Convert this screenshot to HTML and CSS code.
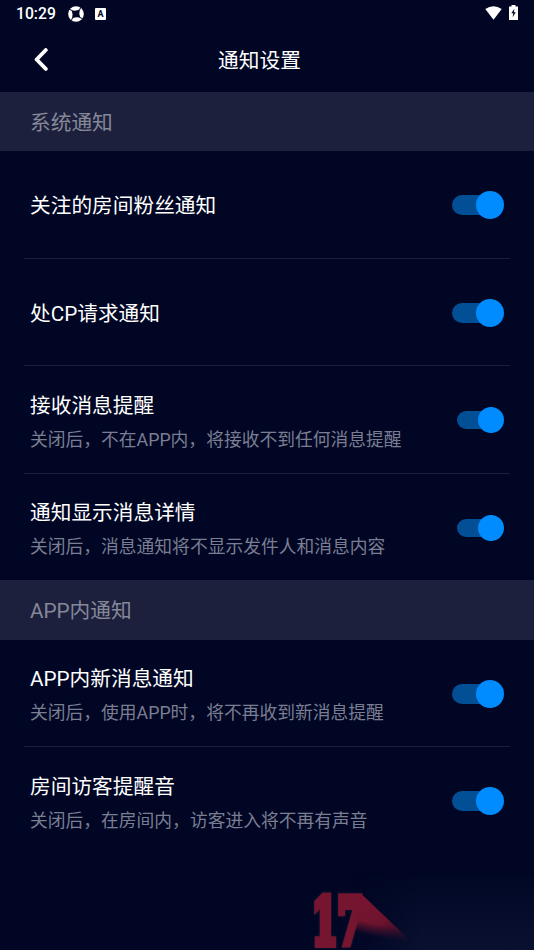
FILE: index.html
```html
<!DOCTYPE html>
<html lang="zh-CN">
<head>
<meta charset="utf-8">
<title>通知设置</title>
<link rel="stylesheet" href="styles.css">
</head>
<body>
<div class="screen">
  <div class="status">
    <span class="time">10:29</span>
    <svg class="aperture" width="16" height="16" viewBox="0 0 16 16">
      <circle cx="8" cy="8" r="7.8" fill="#fff"/>
      <path d="M3.6 4.2Q7.5 5.4 11.8 3.6 10.6 7.5 12.4 11.8 8.5 10.6 4.2 12.4 5.4 8.5 3.6 4.2Z" fill="#000624"/>
      <path d="M4.4 4.6 1.6 3.4M11.4 4.4 12.6 1.6M11.6 11.4 14.4 12.6M4.6 11.6 3.4 14.4" stroke="#000624" stroke-width="1"/>
    </svg>
    <span class="badge">A</span>
    <span class="grow"></span>
    <svg class="wifi" width="17" height="14" viewBox="0 0 17 14"><path d="M.3 3.1Q8.5-2.5 16.7 3.1L8.5 13.7Z" fill="#fff"/></svg>
    <svg class="battery" width="9" height="15" viewBox="0 0 9 15"><path d="M2.5 0h4v1.5H9V15H0V1.5h2.5Z" fill="#fff"/><path d="M5.4 3.7 2.3 8.3h2L3.6 12.2 6.8 7.3H4.9Z" fill="#000624"/></svg>
  </div>
  <header class="nav">
    <svg class="back" width="16" height="24" viewBox="0 0 16 24"><path d="M12.8 2 3.6 11.5l9.2 9.4" fill="none" stroke="#fff" stroke-width="3.8" stroke-linecap="round" stroke-linejoin="round"/></svg>
    <h1>通知设置</h1>
  </header>

  <h2 class="section">系统通知</h2>
  <div class="group">
    <div class="row"><div class="copy"><p class="label">关注的房间粉丝通知</p></div><span class="toggle"></span></div>
    <div class="row"><div class="copy"><p class="label">处CP请求通知</p></div><span class="toggle"></span></div>
    <div class="row"><div class="copy double"><p class="label">接收消息提醒</p><p class="desc">关闭后，不在APP内，将接收不到任何消息提醒</p></div><span class="toggle small"></span></div>
    <div class="row last"><div class="copy double"><p class="label">通知显示消息详情</p><p class="desc">关闭后，消息通知将不显示发件人和消息内容</p></div><span class="toggle small"></span></div>
  </div>

  <h2 class="section second">APP内通知</h2>
  <div class="group">
    <div class="row"><div class="copy double"><p class="label">APP内新消息通知</p><p class="desc">关闭后，使用APP时，将不再收到新消息提醒</p></div><span class="toggle"></span></div>
    <div class="row last"><div class="copy double"><p class="label">房间访客提醒音</p><p class="desc">关闭后，在房间内，访客进入将不再有声音</p></div><span class="toggle"></span></div>
  </div>

  <svg class="mark" width="244" height="80" viewBox="0 0 244 80">
    <defs>
      <linearGradient id="beam" gradientUnits="userSpaceOnUse" x1="80" y1="30" x2="118" y2="80">
        <stop offset="0" stop-color="#76152f"/><stop offset=".4" stop-color="#6d132e"/><stop offset="1" stop-color="#66122e" stop-opacity="0"/>
      </linearGradient>
      <linearGradient id="fade" gradientUnits="userSpaceOnUse" x1="85" y1="48" x2="81" y2="66">
        <stop offset="0" stop-color="#fff"/><stop offset=".3" stop-color="#fff"/><stop offset="1" stop-color="#000"/>
      </linearGradient>
      <linearGradient id="haze" x1="0" y1="0" x2="0" y2="1">
        <stop offset="0" stop-color="#0b1433" stop-opacity="0"/><stop offset="1" stop-color="#0a1130"/>
      </linearGradient>
      <linearGradient id="side" x1="0" y1="0" x2="1" y2="0">
        <stop offset="0" stop-color="#000"/><stop offset=".4" stop-color="#fff"/>
      </linearGradient>
      <mask id="soft" maskUnits="userSpaceOnUse" x="0" y="0" width="244" height="80"><rect width="244" height="80" fill="url(#fade)"/></mask>
      <mask id="edge" maskUnits="userSpaceOnUse" x="0" y="0" width="244" height="80"><rect x="60" width="184" height="80" fill="url(#side)"/></mask>
    </defs>
    <rect x="60" width="184" height="80" fill="url(#haze)" mask="url(#edge)"/>
    <text class="digits" x="22" y="73.5" textLength="51" lengthAdjust="spacingAndGlyphs">17</text>
    <path d="M71 23.5 130 80H66V40Z" fill="url(#beam)" mask="url(#soft)"/>
  </svg>
</div>
</body>
</html>
```
FILE: styles.css
```css
* { box-sizing: border-box; }
body, h1, h2, p { margin: 0; font-weight: 400; }
body { background: #000624; font-family: Roboto, "Noto Sans CJK SC", sans-serif; }
.screen { position: relative; width: 534px; height: 950px; overflow: hidden; background: #000624; color: #fff; }

.status { display: flex; align-items: center; height: 28px; padding: 0 16px 0 16px; }
.time { width: 40px; font-size: 15.7px; font-weight: 500; line-height: 28px; }
.aperture { margin-left: 12px; margin-top: -1px; }
.badge { width: 11px; height: 12px; margin-left: 11px; border-radius: 1px; background: #fff; color: #000624; font-size: 9px; font-weight: 700; line-height: 12px; text-align: center; }
.grow { flex: 1; }
.wifi { margin-right: 7px; margin-top: -2px; }
.battery { margin-top: -3px; flex: none; }

.nav { display: grid; grid-template-columns: 68px 1fr 76px; align-items: center; height: 64px; }
.back { margin-left: 33px; }
h1 { justify-self: center; padding-top: 2px; margin-right: 7px; font-size: 20.7px; line-height: 30px; }

.section { display: flex; align-items: center; height: 59px; padding: 2px 0 0 30px; background: #1c203d; color: #858898; font-size: 20.7px; line-height: 30px; }
.second { height: 60px; }
.group { padding: 0 24px; }
.row { display: flex; align-items: center; justify-content: space-between; height: 107.7px; padding: 1.4px 6px 0; border-bottom: 1px solid #1a1f3a; }
.last { border-bottom: 0; height: 105.9px; }
.second + .group .row { height: 107px; }
.copy { padding-top: 2px; }
.double { padding-top: 5px; }
.label { font-size: 20.7px; line-height: 34px; white-space: nowrap; }
.desc { color: #7b7e92; font-size: 17.78px; line-height: 34px; white-space: nowrap; }

.toggle { position: relative; width: 52px; height: 28px; flex: none; }
.toggle::before { content: ""; position: absolute; left: 0; top: 4px; width: 44px; height: 20px; border-radius: 10px; background: #034f95; }
.toggle::after { content: ""; position: absolute; right: 0; top: 0; width: 28px; height: 28px; border-radius: 50%; background: #008cff; }
.small { width: 47px; height: 26px; }
.small::before { height: 18px; width: 40px; }
.small::after { width: 26px; height: 26px; }

.mark { position: absolute; left: 290px; top: 870px; }
.digits { fill: #76152f; stroke: #76152f; stroke-width: 8px; font-family: "DejaVu Serif", serif; font-size: 63px; font-weight: 700; filter: drop-shadow(0 0 1.5px #0c1c30); }
```
